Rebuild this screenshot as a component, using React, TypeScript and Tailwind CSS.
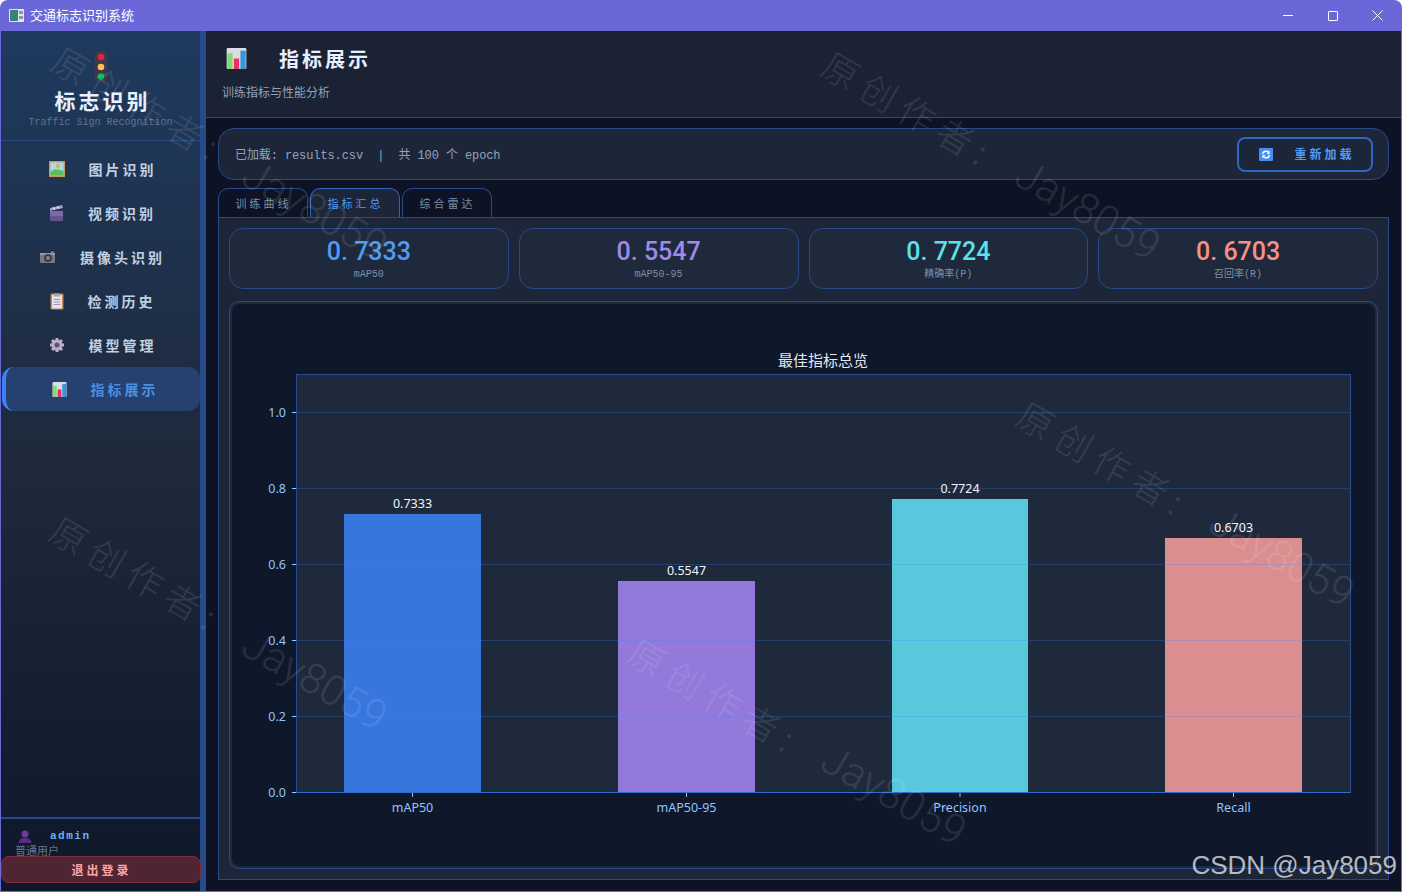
import React from "react";

const SANS = "font-['Noto_Sans_CJK_SC','Noto_Sans',sans-serif]";

function WindowIcon() {
  return (
    <svg width="15" height="13" viewBox="0 0 15 13">
      <rect x="0" y="0" width="15" height="13" fill="#dfe5e8" />
      <rect x="1" y="1" width="8" height="11" fill="#3a7f78" />
      <rect x="10" y="2" width="4" height="3" fill="#8a949c" />
      <rect x="10" y="7" width="4" height="3" fill="#8a949c" />
    </svg>
  );
}

function TrafficLight() {
  return (
    <svg width="14" height="31" viewBox="0 0 14 31">
      <rect x="0.500" y="0" width="13" height="31" rx="5" fill="#40374c" />
      <circle cx="7" cy="6" r="3.300" fill="#e8203f" />
      <circle cx="7" cy="16" r="3.300" fill="#fcc552" />
      <circle cx="7" cy="25.500" r="3.300" fill="#06b95c" />
    </svg>
  );
}

function PictureIcon() {
  return (
    <svg width="16" height="16" viewBox="0 0 16 16">
      <rect width="16" height="16" fill="#c99a63" />
      <rect x="1.500" y="1.500" width="13" height="13" fill="#a5dcef" />
      <circle cx="9" cy="5" r="2" fill="#f7a928" />
      <path d="M1.500 11 C5 7 8 8 14.500 10 V14.500 H1.500 Z" fill="#5dbd5a" />
    </svg>
  );
}

function ClapperIcon() {
  return (
    <svg width="15" height="16" viewBox="0 0 15 16">
      <rect x="1" y="6" width="13" height="10" fill="#7a6aa8" />
      <rect x="1" y="11" width="13" height="5" fill="#64548c" />
      <path d="M1 3 L13 0 L14 3 L1 6 Z" fill="#a898d8" />
      <path d="M4 2.500 L6 4.500 M8 1.500 L10 3.500" stroke="#e6e0f4" strokeWidth="1.300" />
    </svg>
  );
}

function CameraIcon() {
  return (
    <svg width="16" height="13" viewBox="0 0 16 13">
      <rect x="0" y="2" width="15" height="10" rx="1" fill="#7c7680" />
      <rect x="0" y="2" width="15" height="2" fill="#9c97a0" />
      <circle cx="8" cy="7" r="4" fill="#3d3a44" />
      <circle cx="8" cy="7" r="2" fill="#85808c" />
      <rect x="11" y="0.500" width="3" height="2" fill="#8a8590" />
    </svg>
  );
}

function ClipboardIcon() {
  return (
    <svg width="14" height="17" viewBox="0 0 14 17">
      <rect x="0.500" y="0.500" width="13" height="16" rx="1" fill="#c58750" />
      <rect x="2" y="2" width="10" height="13.500" fill="#e4e4ee" />
      <rect x="4" y="0.500" width="6" height="3" fill="#a8a8b8" />
      <path d="M3.500 6.500 H10.500 M3.500 9 H10.500 M3.500 11.500 H10.500" stroke="#9a9aac" strokeWidth="1" />
    </svg>
  );
}

function GearIcon() {
  return (
    <svg width="16" height="16" viewBox="0 0 16 16">
      <path d="M8 1 V15 M1 8 H15 M3 3 L13 13 M13 3 L3 13" stroke="#b9aecb" strokeWidth="3" />
      <circle cx="8" cy="8" r="5.500" fill="#b9aecb" />
      <circle cx="8" cy="8" r="2.500" fill="#5c5070" />
    </svg>
  );
}

function ChartIcon({ size = 15 }: { size?: number }) {
  return (
    <svg width={size} height={size} viewBox="0 0 15 16">
      <rect width="15" height="16" rx="1" fill="#dcdce4" />
      <rect x="0.500" y="4" width="4" height="12" fill="#86d96f" />
      <rect x="5.500" y="8" width="4" height="8" fill="#e8306c" />
      <rect x="10.500" y="2" width="4" height="14" fill="#3496dc" />
    </svg>
  );
}

function UserIcon() {
  return (
    <svg width="14" height="13" viewBox="0 0 14 13">
      <circle cx="7" cy="4" r="3.500" fill="#6a3a9c" />
      <path d="M0.500 13 C1 8.500 4 8 7 8 C10 8 13 8.500 13.500 13 Z" fill="#54307e" />
    </svg>
  );
}

function RefreshIcon() {
  return (
    <svg width="14" height="13" viewBox="0 0 14 13">
      <rect width="14" height="13" rx="1" fill="#4a8df0" />
      <path d="M3.500 6 A3.500 3.500 0 0 1 10 5 M10.500 7 A3.500 3.500 0 0 1 4 8" stroke="#fff" strokeWidth="1.500" fill="none" />
      <path d="M10.500 2.500 V6 H7.500 Z M3.500 10.500 V7 H6.500 Z" fill="#fff" />
    </svg>
  );
}

const navItems = [
  { label: "图片识别", icon: <PictureIcon /> },
  { label: "视频识别", icon: <ClapperIcon /> },
  { label: "摄像头识别", icon: <CameraIcon /> },
  { label: "检测历史", icon: <ClipboardIcon /> },
  { label: "模型管理", icon: <GearIcon /> },
  { label: "指标展示", icon: <ChartIcon />, active: true },
];

const stats = [
  { value: "0. 7333", label: "mAP50", color: "text-[#4f9bf5]" },
  { value: "0. 5547", label: "mAP50-95", color: "text-[#9f8ae8]" },
  { value: "0. 7724", label: "精确率(P)", color: "text-[#5ce0ea]" },
  { value: "0. 6703", label: "召回率(R)", color: "text-[#fb8f85]" },
];

const cnMark = "text-[36px] tracking-[8px] font-light";
const enMark = "text-[42px] font-light font-['Roboto',sans-serif]";

const watermarks = [
  { text: "原创作者:", pos: "left-[140px] top-[103px]", font: cnMark },
  { text: "原创作者:", pos: "left-[138px] top-[573px]", font: cnMark },
  { text: "原创作者:", pos: "left-[910px] top-[108px]", font: cnMark },
  { text: "原创作者:", pos: "left-[1105px] top-[458px]", font: cnMark },
  { text: "原创作者:", pos: "left-[716px] top-[695px]", font: cnMark },
  { text: "Jay8059", pos: "left-[315px] top-[210px]", font: enMark },
  { text: "Jay8059", pos: "left-[1088px] top-[210px]", font: enMark },
  { text: "Jay8059", pos: "left-[315px] top-[680px]", font: enMark },
  { text: "Jay8059", pos: "left-[1282px] top-[557px]", font: enMark },
  { text: "Jay8059", pos: "left-[894px] top-[795px]", font: enMark },
];

// chart data, y pixels measured from the card's inner top-left
const bars = [
  { name: "mAP50", value: "0.7333", top: 210, x: 112, w: 137, color: "#3776dc" },
  { name: "mAP50-95", value: "0.5547", top: 277, x: 386, w: 137, color: "#9279da" },
  { name: "Precision", value: "0.7724", top: 195, x: 660, w: 136, color: "#5ac8dc" },
  { name: "Recall", value: "0.6703", top: 234, x: 933, w: 137, color: "#da8e90" },
];

function BarChart() {
  const originY = 488;
  const unit = 380;
  const ticks = [0, 0.2, 0.4, 0.6, 0.8, 1];
  return (
    <svg viewBox="0 0 1143 562" className="block w-full h-full" fontFamily="'Noto Sans', sans-serif">
      <rect x="64.500" y="70.500" width="1054" height="418" fill="#1e293b" stroke="#2a4d8f" />
      <text x="591" y="62" textAnchor="middle" fontSize="15" fill="#e2e8f0" fontFamily="'Noto Sans CJK SC', sans-serif">
        最佳指标总览
      </text>
      {bars.map((b) => (
        <rect key={b.name} x={b.x} y={b.top} width={b.w} height={originY - b.top} fill={b.color} />
      ))}
      {ticks.map((t) => {
        const y = Math.round(originY - t * unit) + 0.5;
        return (
          <g key={t}>
            <line x1="64" x2="1118" y1={y} y2={y} stroke="#3b82f6" strokeOpacity={t === 0 ? 0.6 : 0.25} />
            <line x1="60" x2="64" y1={y} y2={y} stroke="#93c5fd" />
            <text x="54" y={y + 4.5} textAnchor="end" fontSize="12.500" fill="#93c5fd">
              {t.toFixed(1)}
            </text>
          </g>
        );
      })}
      {bars.map((b) => {
        const cx = b.x + b.w / 2;
        return (
          <g key={b.name}>
            <text x={cx} y={b.top - 6} textAnchor="middle" fontSize="12.500" fill="#f1f5f9">
              {b.value}
            </text>
            <line x1={cx} x2={cx} y1="489" y2="493" stroke="#93c5fd" />
            <text x={cx} y="508" textAnchor="middle" fontSize="12.500" fill="#93c5fd">
              {b.name}
            </text>
          </g>
        );
      })}
    </svg>
  );
}

export default function App() {
  return (
    <div className={`relative w-[1402px] h-[892px] overflow-hidden flex flex-col bg-[#6a67d8] rounded-t-lg ${SANS}`}>
      <div className="h-[31px] shrink-0 flex items-center pl-[9px] text-white text-[13px]">
        <WindowIcon />
        <span className="ml-[6px] -mt-px">交通标志识别系统</span>
        <div className="ml-auto mr-[2px] flex items-center">
          <div className="w-[45px] h-[31px] flex items-center justify-center">
            <div className="w-[10px] h-px bg-white" />
          </div>
          <div className="w-[45px] h-[31px] flex items-center justify-center">
            <div className="w-[10px] h-[10px] border border-white rounded-[1px]" />
          </div>
          <div className="w-[45px] h-[31px] flex items-center justify-center">
            <svg width="11" height="11" viewBox="0 0 11 11">
              <path d="M0.500 0.500 L10.500 10.500 M10.500 0.500 L0.500 10.500" stroke="#fff" />
            </svg>
          </div>
        </div>
      </div>

      <div className="flex-1 min-h-0 flex mx-px mb-px">
        <aside className="w-[205px] shrink-0 flex flex-col border-r-[6px] border-[#264a8a] bg-gradient-to-b from-[#1e3a5f] via-[#1e293b] to-[#0f172a]">
          <div className="h-[110px] shrink-0 border-b border-[#264a8a] flex flex-col items-center pt-5">
            <TrafficLight />
            <div className="mt-[4px] ml-1 text-[21px] leading-7 font-bold tracking-[3px] text-[#e8f0ff]">标志识别</div>
            <div className="mt-[3px] text-[10px] leading-3 font-['Liberation_Mono',monospace] text-[#64748b]">
              Traffic Sign Recognition
            </div>
          </div>
          <nav className="mt-[6px] flex flex-col">
            {navItems.map((item) => (
              <div
                key={item.label}
                className={
                  item.active
                    ? "h-11 ml-px pl-1 flex items-center justify-center gap-6 rounded-xl border-l-4 border-[#3b82f6] bg-[#26416f] text-[#4a90e2] text-sm font-bold tracking-[3px]"
                    : "h-11 pl-1 flex items-center justify-center gap-6 text-[#c3d0e0] text-sm font-bold tracking-[3px]"
                }
              >
                {item.icon}
                <span>{item.label}</span>
              </div>
            ))}
          </nav>
          <div className="mt-auto h-[74px] shrink-0 border-t-2 border-[#264a8a] flex flex-col">
            <div className="pl-[17px] pt-[10px] flex items-center gap-[18px] h-[25px]">
              <UserIcon />
              <span className="text-[11px] font-bold tracking-[1.500px] text-[#6cb0f5] font-['Liberation_Mono',monospace]">admin</span>
            </div>
            <div className="pl-[14px] text-[11px] leading-[12px] text-[#64748b]">普通用户</div>
            <div className="h-[27px] w-[200px] pl-px rounded-lg border border-[#7f2d3a] bg-[#4f2433] flex items-center justify-center text-xs font-bold tracking-[3px] text-[#fca5a5]">
              退出登录
            </div>
          </div>
        </aside>

        <main className="flex-1 min-w-0 flex flex-col bg-[#0d1324]">
          <header className="h-[87px] shrink-0 border-b border-[#264a8a] bg-[#1a2233] pl-4 pt-4">
            <div className="flex items-center gap-[32px] pl-1 h-[23px]">
              <ChartIcon size={21} />
              <h1 className="text-[20px] font-bold tracking-[3px] text-[#e8f0ff]">指标展示</h1>
            </div>
            <p className="mt-[14px] text-xs text-[#94a3b8]">训练指标与性能分析</p>
          </header>

          <div className="flex-1 min-h-0 flex flex-col px-3 pt-[10px] pb-[11px]">
            <div className="h-[52px] shrink-0 rounded-2xl border border-[#264a8a] bg-[#1c2638] flex items-center pl-4 pr-[15px]">
              <span className="mt-1 text-xs tracking-[-0.100px] whitespace-pre text-[#94a3b8] font-['Liberation_Mono','Noto_Sans_CJK_SC',monospace]">
                已加载: results.csv  |  共 100 个 epoch
              </span>
              <button className="ml-auto w-[136px] h-[35px] pl-1 rounded-lg border-2 border-[#2f66c0] flex items-center justify-center gap-[21px] text-[#4f9bf5] text-xs font-bold tracking-[3px]">
                <RefreshIcon />
                重新加载
              </button>
            </div>

            <div className="mt-2 h-[29px] shrink-0 flex gap-[2px]">
              <div className="w-[90px] pl-px rounded-t-[10px] border border-b-0 border-[#264a8a] flex items-center justify-center text-[11px] tracking-[3px] text-[#7f8ea3]">
                训练曲线
              </div>
              <div className="w-[90px] pl-px rounded-t-[10px] border border-b-0 border-[#2f66c0] bg-[#1c2638] flex items-center justify-center text-[11px] tracking-[3px] text-[#4f9bf5]">
                指标汇总
              </div>
              <div className="w-[90px] pl-px rounded-t-[10px] border border-b-0 border-[#264a8a] flex items-center justify-center text-[11px] tracking-[3px] text-[#7f8ea3]">
                综合雷达
              </div>
            </div>

            <div className="flex-1 min-h-0 flex flex-col border border-[#264a8a] bg-[#1c2638] px-[10px] pt-[10px] pb-[10px]">
              <div className="h-[61px] shrink-0 grid grid-cols-4 gap-[10px]">
                {stats.map((s) => (
                  <div key={s.label} className="rounded-[14px] border border-[#264a8a] bg-[#1e293b] flex flex-col items-center pt-[6px]">
                    <div className={`text-[25px] leading-[34px] font-medium font-['Roboto',sans-serif] ${s.color}`}>{s.value}</div>
                    <div className="text-[10px] leading-3 text-[#7f8ea3] font-['Liberation_Mono','Noto_Sans_CJK_SC',monospace]">{s.label}</div>
                  </div>
                ))}
              </div>
              <div className="mt-3 flex-1 min-h-0 rounded-[10px] border border-[#264a8a] bg-[#1e293b] p-[2px]">
                <div className="w-full h-full bg-[#0f172a] rounded-lg">
                  <BarChart />
                </div>
              </div>
            </div>
          </div>
        </main>
      </div>

      {watermarks.map((w) => (
        <div
          key={w.pos}
          className={`absolute ${w.pos} -translate-x-1/2 -translate-y-1/2 rotate-[30deg] whitespace-nowrap pointer-events-none text-white/10 ${w.font}`}
        >
          {w.text}
        </div>
      ))}
      <div className="absolute right-[5px] bottom-[11px] text-[26px] leading-8 text-white/70 font-['Liberation_Sans',sans-serif] pointer-events-none">
        CSDN @Jay8059
      </div>
    </div>
  );
}
